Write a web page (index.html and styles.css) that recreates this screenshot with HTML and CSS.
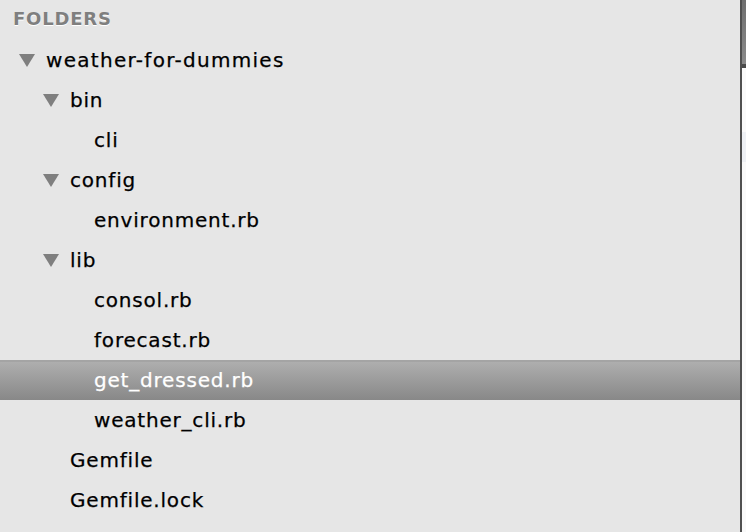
FILE: index.html
```html
<!DOCTYPE html>
<html>
<head>
<meta charset="utf-8">
<link rel="stylesheet" href="styles.css">
</head>
<body>
<div class="app">
  <aside class="sidebar">
    <div class="heading">FOLDERS</div>
    <ul class="tree">
      <li class="row lvl0"><span class="tri"></span><span class="name">weather-for-dummies</span></li>
      <li class="row lvl1"><span class="tri"></span><span class="name">bin</span></li>
      <li class="row lvl2"><span class="name">cli</span></li>
      <li class="row lvl1"><span class="tri"></span><span class="name">config</span></li>
      <li class="row lvl2"><span class="name">environment.rb</span></li>
      <li class="row lvl1"><span class="tri"></span><span class="name">lib</span></li>
      <li class="row lvl2"><span class="name">consol.rb</span></li>
      <li class="row lvl2"><span class="name">forecast.rb</span></li>
      <li class="row lvl2 selected"><span class="name">get_dressed.rb</span></li>
      <li class="row lvl2"><span class="name">weather_cli.rb</span></li>
      <li class="row lvl1 file"><span class="name">Gemfile</span></li>
      <li class="row lvl1 file"><span class="name">Gemfile.lock</span></li>
    </ul>
  </aside>
  <div class="divider"></div>
  <div class="editor">
    <div class="tabbar"></div>
    <div class="tabline"></div>
    <div class="content">
      <div class="gap"></div>
      <div class="hl"></div>
    </div>
  </div>
</div>
</body>
</html>
```

FILE: styles.css
```css
html, body {
  margin: 0;
  padding: 0;
  height: 100%;
  overflow: hidden;
}
.app {
  display: flex;
  width: 746px;
  height: 532px;
}
.sidebar {
  width: 740px;
  background: #e6e6e6;
  font-family: "DejaVu Sans", sans-serif;
}
.heading {
  height: 40px;
  padding-left: 13px;
  box-sizing: border-box;
  padding-top: 8px;
  font-size: 18px;
  font-weight: bold;
  color: #7f7f7f;
  text-shadow: 0 1px 0 #fff;
  letter-spacing: 0.8px;
}
.tree {
  list-style: none;
  margin: 0;
  padding: 0;
}
.row {
  height: 40px;
  display: flex;
  align-items: center;
  font-size: 20px;
  letter-spacing: 0.8px;
  color: #000;
  -webkit-text-stroke: 0.25px currentColor;
  box-sizing: border-box;
}
.lvl0 { padding-left: 19px; letter-spacing: 1.3px; }
.lvl1 { padding-left: 43px; }
.lvl2 { padding-left: 94px; }
.lvl1.file { padding-left: 70px; }
.tri {
  width: 0;
  height: 0;
  border-left: 8px solid transparent;
  border-right: 8px solid transparent;
  border-top: 13px solid #7f7f7f;
  margin-right: 11px;
  margin-top: 1px;
}
.selected {
  background: linear-gradient(#aeaeae, #888888);
  border-top: 2px solid #a4a4a4;
  color: #fff;
}
.selected .name {
  margin-top: -2px;
}
.divider {
  width: 2px;
  background: #4f4f4f;
}
.editor {
  flex: 1;
  display: flex;
  flex-direction: column;
  background: #f9f9f9;
}
.tabbar {
  height: 64px;
  background: linear-gradient(#6e6e6e, #8a8a8a);
}
.tabline {
  height: 4px;
  background: #4a4a4a;
}
.content {
  flex: 1;
}
.gap { height: 64px; }
.hl {
  height: 30px;
  background: #eef0f4;
}
```
